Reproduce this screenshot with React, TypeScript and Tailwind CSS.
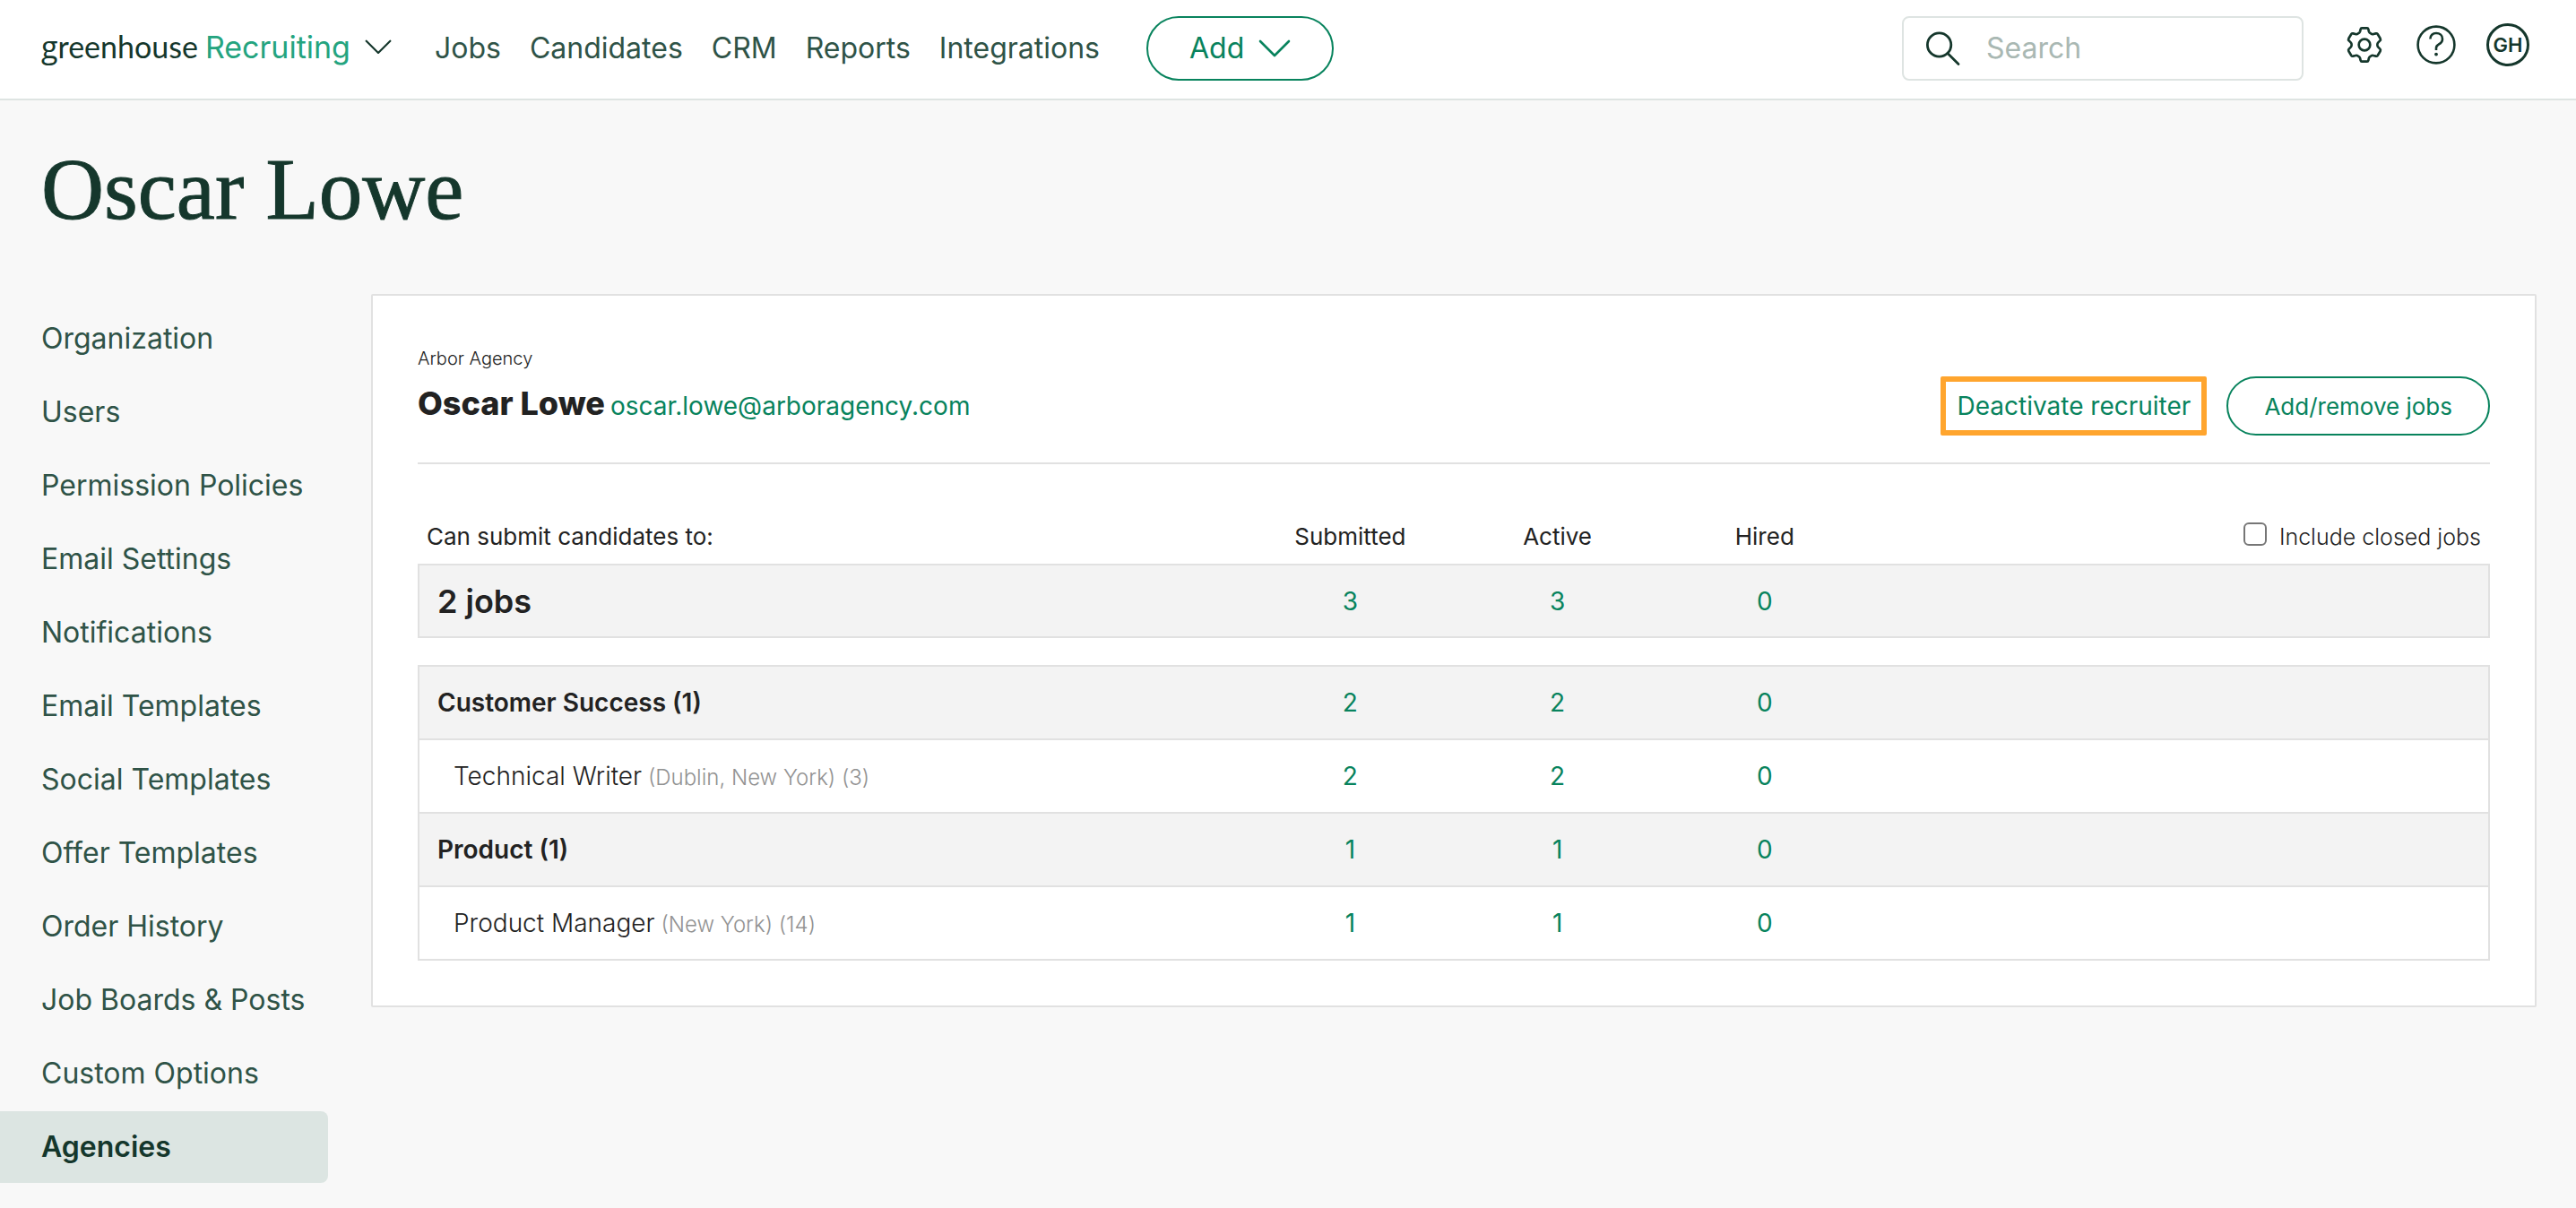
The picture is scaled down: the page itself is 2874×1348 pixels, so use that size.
import React, { useState } from 'react';

interface JobRow {
  id: string;
  name: string;
  detail?: string;
  counts: number[];
  group?: boolean;
}

const NAV_LINKS = ['Jobs', 'Candidates', 'CRM', 'Reports', 'Integrations'];

const SIDEBAR_LINKS = [
  'Organization',
  'Users',
  'Permission Policies',
  'Email Settings',
  'Notifications',
  'Email Templates',
  'Social Templates',
  'Offer Templates',
  'Order History',
  'Job Boards & Posts',
  'Custom Options',
  'Agencies',
];

const ROWS: JobRow[] = [
  { id: 'cs', name: 'Customer Success (1)', counts: [2, 2, 0], group: true },
  { id: 'tw', name: 'Technical Writer', detail: '(Dublin, New York) (3)', counts: [2, 2, 0] },
  { id: 'product', name: 'Product (1)', counts: [1, 1, 0], group: true },
  { id: 'pm', name: 'Product Manager', detail: '(New York) (14)', counts: [1, 1, 0] },
];

function Chevron({ className }: { className?: string }) {
  return (
    <svg viewBox="0 0 36 20" fill="none" stroke="currentColor" strokeWidth="2.6" strokeLinecap="round" strokeLinejoin="round" className={className} aria-hidden="true">
      <path d="M2 2 L18 18 L34 2" />
    </svg>
  );
}

function GearIcon() {
  return (
    <svg viewBox="-72 -72 144 144" fill="none" stroke="currentColor" strokeWidth="8" strokeLinejoin="round" className="w-12 h-12" aria-hidden="true">
      <path d="M-9 -56 H9 Q12 -56 13 -52 L15 -44 Q16 -41 21 -38 Q26 -34 30 -36 L38 -38 Q42 -39 44 -36 L53 -21 Q55 -17 52 -14 L46 -8 Q43 -5 43 0 Q43 5 46 8 L52 14 Q55 17 53 21 L44 36 Q42 39 38 38 L30 36 Q26 34 21 38 Q16 41 15 44 L13 52 Q12 56 9 56 H-9 Q-12 56 -13 52 L-15 44 Q-16 41 -21 38 Q-26 34 -30 36 L-38 38 Q-42 39 -44 36 L-53 21 Q-55 17 -52 14 L-46 8 Q-43 5 -43 0 Q-43 -5 -46 -8 L-52 -14 Q-55 -17 -53 -21 L-44 -36 Q-42 -39 -38 -38 L-30 -36 Q-26 -34 -21 -38 Q-16 -41 -15 -44 L-13 -52 Q-12 -56 -9 -56 Z" />
      <circle r="19" />
    </svg>
  );
}

function HelpIcon() {
  return (
    <svg viewBox="0 0 48 48" fill="none" stroke="currentColor" strokeWidth="2.6" className="w-12 h-12" aria-hidden="true">
      <circle cx="24" cy="24" r="20.4" />
      <path d="M17.4 17.4 C17.4 13.4 20.2 11 24 11 C28 11 31 13.6 31 17.4 C31 20.4 29.4 22 27 23.4 C24.8 24.7 24 25.4 24 27.4 V30" />
      <circle cx="24" cy="34.6" r="1.9" fill="currentColor" stroke="none" />
    </svg>
  );
}

function SearchIcon() {
  return (
    <svg viewBox="0 0 40 40" fill="none" stroke="currentColor" strokeWidth="2.8" strokeLinecap="round" className="w-10 h-10 shrink-0" aria-hidden="true">
      <circle cx="15.6" cy="16" r="13.2" />
      <path d="M25 25.6 L37 37.4" />
    </svg>
  );
}

function CountCells({ counts, cellClass }: { counts: number[]; cellClass: string }) {
  return (
    <>
      {counts.map((count, i) => (
        <td key={i} className={`text-center ${cellClass}`}>
          <a href="#" className="text-[#08835d]">{count}</a>
        </td>
      ))}
    </>
  );
}

export default function App() {
  const [includeClosed, setIncludeClosed] = useState(false);
  const [query, setQuery] = useState('');

  return (
    <div className="min-h-screen bg-[#f8f8f8] pb-7 font-['Inter',sans-serif] text-[#222222]">

      {/* Top bar */}
      <header className="flex h-28 items-center justify-between border-b-2 border-[#dee4e2] bg-white pb-0.5 pl-[46px] pr-[52px] text-[#15372c]">
        <div className="flex items-center">
          <button type="button" className="flex items-center gap-4 pb-1">
            <span className="flex items-baseline gap-2 leading-[44px]">
              <span className="font-['Lato',sans-serif] text-[34px]">
                <span className="font-['Open_Sans',sans-serif]">g</span>reenhouse
              </span>
              <span className="text-[34px] text-[#24a47f]">Recruiting</span>
            </span>
            <Chevron className="w-[30px]" />
          </button>

          <nav className="ml-12 flex items-center gap-8 text-[32px] text-[#2f5347]">
            {NAV_LINKS.map((label) => (
              <a key={label} href="#">{label}</a>
            ))}
          </nav>

          <button type="button" className="ml-[52px] flex h-[72px] items-center gap-4 rounded-full border-2 border-[#08835d] px-[46px] text-[32px] text-[#08835d]">
            Add
            <Chevron className="w-9" />
          </button>
        </div>

        <div className="flex items-center gap-11">
          <label className="flex h-[72px] w-[448px] items-center gap-7 rounded-lg border-2 border-[#dee4e2] px-6">
            <SearchIcon />
            <input
              type="search"
              aria-label="Search"
              placeholder="Search"
              value={query}
              onChange={(e) => setQuery(e.target.value)}
              className="w-full min-w-0 bg-transparent text-[32px] outline-none placeholder:text-[#a9b8b3]"
            />
          </label>
          <div className="flex items-center gap-8 pb-2">
            <button type="button" aria-label="Settings"><GearIcon /></button>
            <button type="button" aria-label="Help"><HelpIcon /></button>
            <button type="button" className="flex h-12 w-12 items-center justify-center rounded-full border-[3px] border-[#15372c] text-[22px] font-semibold">GH</button>
          </div>
        </div>
      </header>

      <h1 className="pl-[46px] pt-[52px] font-['Liberation_Serif',serif] text-[97px] leading-[96px] text-[#15372c] [-webkit-text-stroke:1px_#15372c]">Oscar Lowe</h1>

      <div className="mt-[68px] flex items-start gap-12 pr-11">

        {/* Settings menu */}
        <aside className="w-[366px] shrink-0 pt-[10px]">
          <ul className="flex flex-col gap-0.5 text-[32px]">
            {SIDEBAR_LINKS.map((label) => (
              <li key={label}>
                <a
                  href="#"
                  className={`flex h-20 items-center rounded-r-lg pl-[46px] ${label === 'Agencies' ? 'bg-[#dce5e2] font-semibold text-[#15372c]' : 'text-[#2f5347]'}`}
                >
                  {label}
                </a>
              </li>
            ))}
          </ul>
        </aside>

        <main className="min-w-0 flex-1 rounded-xs border-2 border-[#e1e1e1] bg-white p-[50px]">
          <p className="text-xl font-light leading-10">Arbor Agency</p>
          <div className="flex items-start justify-between border-b-2 border-[#e1e1e1] pb-[30px]">
            <div className="flex items-baseline gap-1.5 leading-[60px]">
              <h2 className="text-[36px] font-extrabold">Oscar Lowe</h2>
              <a href="#" className="text-[28px] text-[#08835d]">oscar.lowe@arboragency.com</a>
            </div>
            <div className="flex items-center gap-[22px]">
              <a href="#" className="flex h-[66px] items-center rounded-xs border-[6px] border-[#ffa52e] px-3 text-[28px] text-[#08835d]">Deactivate recruiter</a>
              <button type="button" className="h-[66px] rounded-full border-2 border-[#08835d] px-10 text-[26px] text-[#08835d]">Add/remove jobs</button>
            </div>
          </div>

          <table className="mt-[61px] w-full table-fixed border-separate border-spacing-0 text-[28px]">
            <colgroup>
              <col className="w-[40%]" />
              <col className="w-[10%]" />
              <col className="w-[10%]" />
              <col className="w-[10%]" />
              <col className="w-[30%]" />
            </colgroup>
            <thead>
              <tr className="text-[26px] leading-10">
                <th className="pb-2.5 pl-2.5 text-left font-normal">Can submit candidates to:</th>
                <th className="pb-2.5 font-normal">Submitted</th>
                <th className="pb-2.5 font-normal">Active</th>
                <th className="pb-2.5 font-normal">Hired</th>
                <th className="pb-2.5 pr-2.5 font-light">
                  <label className="flex items-start justify-end gap-[14px] text-[25px]">
                    <input
                      type="checkbox"
                      checked={includeClosed}
                      onChange={(e) => setIncludeClosed(e.target.checked)}
                      className="mt-1 h-[26px] w-[26px] appearance-none rounded-md border-2 border-[#767676] bg-white checked:bg-[#08835d]"
                    />
                    Include closed jobs
                  </label>
                </th>
              </tr>
            </thead>
            <tbody>
              <tr className="h-[83px] bg-[#f3f3f3]">
                <td className="border-y-2 border-l-2 border-[#e1e1e1] pl-5 text-[36px] font-semibold">2 jobs</td>
                <CountCells counts={[3, 3, 0]} cellClass="border-y-2 border-[#e1e1e1]" />
                <td className="border-y-2 border-r-2 border-[#e1e1e1]" />
              </tr>
              <tr className="h-8">
                <td colSpan={5} className="border-b-2 border-[#e1e1e1]" />
              </tr>
              {ROWS.map((row) => (
                <tr key={row.id} className={`h-[82px] ${row.group ? 'bg-[#f3f3f3]' : 'bg-white'}`}>
                  <td className={`border-b-2 border-l-2 border-[#e1e1e1] ${row.group ? 'pl-5 font-semibold' : 'pl-[38px] font-light'}`}>
                    {row.name}
                    {row.detail && <span className="text-2xl text-[#929292]"> {row.detail}</span>}
                  </td>
                  <CountCells counts={row.counts} cellClass="border-b-2 border-[#e1e1e1]" />
                  <td className="border-b-2 border-r-2 border-[#e1e1e1]" />
                </tr>
              ))}
            </tbody>
          </table>
        </main>
      </div>
    </div>
  );
}
